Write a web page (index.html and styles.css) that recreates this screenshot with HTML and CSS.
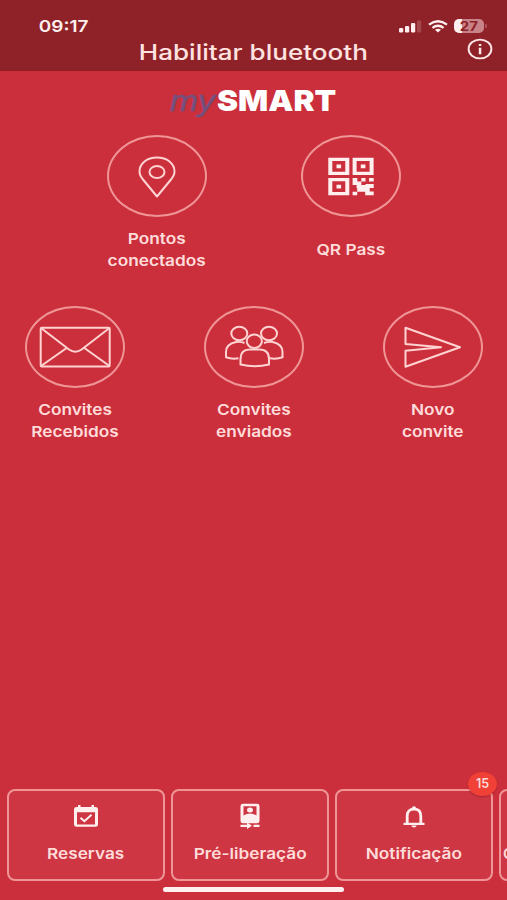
FILE: index.html
```html
<!DOCTYPE html>
<html lang="pt-BR">
  <head>
    <meta charset="UTF-8" />
    <meta name="viewport" content="width=device-width, initial-scale=1.0" />
    <title>mySMART</title>
    <link rel="stylesheet" href="styles.css">
  </head>
  <body>
    <div class="app">
      <header class="header">
        <div class="status">
          <span class="status-time"><span class="wide">09:17</span></span>
          <div class="status-icons">
            <svg width="23" height="13" viewBox="0 0 23 13">
              <rect x="0" y="8" width="4.2" height="4.4" rx="1.2" fill="#fff0ef" />
              <rect x="6" y="6" width="4.2" height="6.4" rx="1.2" fill="#fff0ef" />
              <rect x="12" y="3" width="4.2" height="9.4" rx="1.2" fill="#fff0ef" />
              <rect x="18" y="0.5" width="4.2" height="12" rx="1.2" fill="#a5454c" />
            </svg>
            <svg width="20" height="13" viewBox="0 0 20 13" fill="none" stroke="#fff0ef" stroke-width="2.3">
              <path d="M1 4.6Q10 -2 19 4.6" />
              <path d="M4.4 7.8Q10 3.6 15.6 7.8" />
              <path d="M7 9.7Q10 7.8 13 9.7L10 12.6Z" fill="#fff0ef" stroke="none" />
            </svg>
            <div class="battery"><span class="wide">27</span></div>
          </div>
        </div>
        <h1 class="header-title"><span class="wide">Habilitar bluetooth</span></h1>
        <svg class="header-info" width="26" height="22" viewBox="0 0 26 22">
          <ellipse cx="13" cy="11" rx="11.4" ry="9.4" fill="none" stroke="#ffe9e8" stroke-width="1.9" />
          <path d="M11.8 6h2.5v2.1h-2.5zM11.8 9.8h2.5v6.4h-2.5z" fill="#ffe9e8" />
        </svg>
      </header>

      <main class="main">
        <div class="logo">
          <span class="logo-my">my</span><span class="logo-smart">SMART</span>
        </div>

        <div class="menu menu-top">
          <a class="menu-item">
            <span class="menu-circle">
              <svg class="menu-icon" viewBox="0 0 100 82">
                <path d="M50 61.5L36.4 45C33.8 42 32.5 39.5 32.5 36.500C32.5 28.500 40 22.500 50 22.500S67.500 28.500 67.500 36.500C67.500 39.500 66.200 42 63.600 45Z" />
                <ellipse cx="50" cy="37" rx="7.500" ry="6" />
              </svg>
            </span>
            <span class="menu-label"><span class="wide">Pontos<br />conectados</span></span>
          </a>
          <a class="menu-item">
            <span class="menu-circle">
              <svg class="menu-icon menu-icon-fill" viewBox="0 0 100 82">
                <path fill-rule="evenodd" d="M27.300 22.700h21v17.300h-21zM31.300 26v10.700h13v-10.700zM35.500 29.500h4.600v3.700h-4.600z" />
                <path fill-rule="evenodd" d="M51.600 22.700h21v17.300h-21zM55.600 26v10.700h13v-10.700zM59.800 29.500h4.600v3.700h-4.600z" />
                <path fill-rule="evenodd" d="M27.300 43h21v17.300h-21zM31.300 46.300v10.700h13v-10.700zM35.500 49.800h4.600v3.700h-4.600z" />
                <path d="M51.600 43h4.700v3.500h4v-3.500h4.200v3.500h-4.200v3.500h4.200v-1h8.200v4h-4v3.500h4v3.800h-8.500v-3.500h-4v-3.500h-4.600v-3.300h-4zM68 43h4.700v3.500h-4.700zM51.600 56.800h4.600v3.500h-4.600zM56.200 53.300h4v3.500h-4z" />
              </svg>
            </span>
            <span class="menu-label"><span class="wide">QR Pass</span></span>
          </a>
        </div>

        <div class="menu menu-bottom">
          <a class="menu-item">
            <span class="menu-circle">
              <svg class="menu-icon" viewBox="0 0 100 82">
                <rect x="15.700" y="21.700" width="69" height="38.700" rx="1" />
                <path d="M16 22L44 43.500Q50.300 48 56.600 43.500L84.500 22M16 60L42 41.700M84.500 60L59 41.700" />
              </svg>
            </span>
            <span class="menu-label"><span class="wide">Convites<br />Recebidos</span></span>
          </a>
          <a class="menu-item">
            <span class="menu-circle">
              <svg class="menu-icon" viewBox="0 0 100 82">
                <ellipse cx="35.300" cy="27.500" rx="8" ry="6.700" />
                <ellipse cx="65" cy="27.500" rx="8" ry="6.700" />
                <ellipse cx="50.300" cy="35.300" rx="7.600" ry="6.700" />
                <path d="M40.500 37Q37 35.500 32 36Q22 38 22 46V51.300Q27.500 53.300 34.500 52.300M60 37Q63.500 35.500 68.500 36Q78.500 38 78.500 46V51.300Q73 53.300 66 52.300" />
                <path d="M36.500 58.500V53Q36.500 43.500 45.500 43.500H55.500Q65 43.500 65 53V58.500Q51 62 36.500 58.500Z" />
              </svg>
            </span>
            <span class="menu-label"><span class="wide">Convites<br />enviados</span></span>
          </a>
          <a class="menu-item">
            <span class="menu-circle">
              <svg class="menu-icon" viewBox="0 0 100 82">
                <path d="M22.500 21.700L77 41.300L22.500 60.700V44.700L58 41.300L22.500 38Z" />
              </svg>
            </span>
            <span class="menu-label"><span class="wide">Novo<br />convite</span></span>
          </a>
        </div>
      </main>

      <nav class="tabs">
        <a class="tab">
          <svg class="tab-icon" viewBox="0 0 28 28">
            <path fill-rule="evenodd" d="M6 3h2.500v2h11v-2h2.500v2h1.500q2.500 0 2.500 2.200v15.300q0 2.300-2.500 2.300h-19q-2.500 0-2.500-2.300v-15.300q0-2.200 2.500-2.200h1.500zM5 10.200v12.200h18v-12.200z" />
            <path d="M8.500 15.800L12.400 19.200L19.500 12.800" fill="none" stroke="#fff0ef" stroke-width="2" />
          </svg>
          <span class="tab-label"><span class="wide">Reservas</span></span>
        </a>
        <a class="tab">
          <svg class="tab-icon" viewBox="0 0 28 28">
            <path fill-rule="evenodd" d="M7 1.800h14q2.500 0 2.500 2.200v15q0 2.200-2.500 2.200h-14q-2.500 0-2.500-2.200v-15q0-2.200 2.500-2.200zM7.500 4.200v9.300q6.500-4 13 0v-9.300z" />
            <ellipse cx="14" cy="8" rx="3" ry="2.500" />
            <path d="M4.500 22.700h6.500v-2.200l5 3.300l-5 3.300v-2.200h-6.500zM17.500 22.700h6v2.200h-6z" />
          </svg>
          <span class="tab-label"><span class="wide">Pré-liberação</span></span>
        </a>
        <a class="tab">
          <svg class="tab-icon" viewBox="0 0 28 28">
            <path d="M7.200 21V14Q7.200 7.200 14 7.200Q20.800 7.200 20.800 14V21" fill="none" stroke="#fff0ef" stroke-width="2.800" />
            <path d="M3.500 20.800h21v2.200h-21zM11.300 23.600h5.400q-.4 2-2.700 2t-2.700-2zM12 7v-1.200q0-1.500 2-1.500t2 1.500v1.200z" />
          </svg>
          <span class="tab-label"><span class="wide">Notificação</span></span>
          <span class="badge">15</span>
        </a>
        <a class="tab tab-next">
          <span class="tab-label">C</span>
        </a>
      </nav>
      <div class="home-bar"></div>
    </div>
  </body>
</html>
```

FILE: styles.css
```css
:root {
  --bg: #cb2f3c;
  --bg-header: #8f2228;
  --bg-tab: #cd3642;
  --line: #ef9596;
  --text: #ffdcda;
  --white: #fff0ef;
  --badge: #f14036;
}

* {
  margin: 0;
  padding: 0;
  box-sizing: border-box;
}

body {
  font-family: Inter, "Liberation Sans", sans-serif;
  color: var(--text);
  background: var(--bg);
}

.app {
  display: flex;
  flex-direction: column;
  width: 507px;
  height: 900px;
  overflow: hidden;
}

/* expanded lettering */
.wide {
  display: inline-block;
  transform: scaleX(1.15);
}

.header {
  position: relative;
  height: 71px;
  padding-top: 16px;
  background: var(--bg-header);
}

.status {
  display: flex;
  justify-content: space-between;
  align-items: center;
  height: 20px;
  padding: 0 23px 0 42px;
}

.status-time {
  color: var(--white);
  font-size: 16.5px;
  font-weight: 600;
}

.status-icons {
  display: flex;
  align-items: center;
  gap: 6px;
}

.battery {
  position: relative;
  width: 30px;
  height: 14px;
  border-radius: 5px;
  background: linear-gradient(90deg, #fff0ef 27%, #c98287 27%);
  color: var(--bg-header);
  font-size: 13px;
  font-weight: 700;
  line-height: 14px;
  text-align: center;
}

.battery::after {
  position: absolute;
  top: 5px;
  right: -3px;
  width: 2px;
  height: 4px;
  border-radius: 1px;
  background: #ad5258;
  content: '';
}

.header-title {
  color: #ffe3e1;
  font-size: 21px;
  font-weight: 500;
  line-height: 34px;
  text-align: center;
}

.header-title .wide {
  transform: scaleX(1.24);
}

.header-info {
  position: absolute;
  top: 38px;
  right: 14px;
}

.main {
  flex: 1;
}

.logo {
  display: flex;
  align-items: center;
  height: 30px;
  margin-top: 15px;
  padding-left: 170px;
  line-height: 30px;
}

.logo-my {
  width: 47px;
  color: #75507f;
  font-family: "Liberation Sans", sans-serif;
  font-size: 30px;
  font-style: italic;
  font-weight: 400;
  -webkit-text-stroke: 0.6px #75507f;
  transform: scaleX(1.12);
  transform-origin: left;
}

.logo-smart {
  color: #fff;
  font-size: 29px;
  font-weight: 900;
  transform: scaleX(1.09);
  transform-origin: left;
}

.menu {
  display: flex;
}

.menu-top {
  gap: 74px;
  margin-top: 19px;
  padding-left: 97px;
}

.menu-bottom {
  gap: 59px;
  margin-top: 34px;
  padding-left: 15px;
}

.menu-item {
  display: flex;
  flex-direction: column;
  align-items: center;
  gap: 11px;
  width: 120px;
}

.menu-circle {
  width: 100px;
  height: 82px;
  border: 2px solid var(--line);
  border-radius: 50%;
}

.menu-icon {
  display: block;
  width: 100px;
  height: 82px;
  margin: -2px;
  fill: none;
  stroke: #ffd3d1;
  stroke-width: 2;
  stroke-linejoin: round;
}

.menu-icon-fill {
  fill: var(--white);
  stroke: none;
}

.menu-label {
  display: flex;
  align-items: center;
  height: 44px;
  font-size: 15px;
  font-weight: 600;
  line-height: 22px;
  text-align: center;
}

.tabs {
  display: flex;
  gap: 6px;
  padding-left: 7px;
}

.tab {
  position: relative;
  display: flex;
  flex: none;
  flex-direction: column;
  align-items: center;
  width: 158px;
  height: 92px;
  padding-top: 11px;
  border: 2px solid var(--line);
  border-radius: 8px;
  background: var(--bg-tab);
}

.tab-icon {
  width: 28px;
  height: 28px;
  fill: var(--white);
}

.tab-label {
  margin-top: 13px;
  font-size: 15px;
  font-weight: 600;
  line-height: 22px;
}

.tab-next {
  align-items: flex-start;
  padding-top: 39px;
  padding-left: 2px;
}

.badge {
  position: absolute;
  top: -19px;
  right: -6px;
  width: 29px;
  height: 24px;
  border-radius: 50%;
  background: var(--badge);
  box-shadow: 0 1px 2px rgba(90, 0, 0, 0.3);
  font-size: 12.500px;
  font-weight: 600;
  line-height: 24px;
  text-align: center;
  z-index: 1;
}

.home-bar {
  width: 181px;
  height: 5px;
  margin: 6px 0 8px 163px;
  border-radius: 3px;
  background: var(--white);
}
```
